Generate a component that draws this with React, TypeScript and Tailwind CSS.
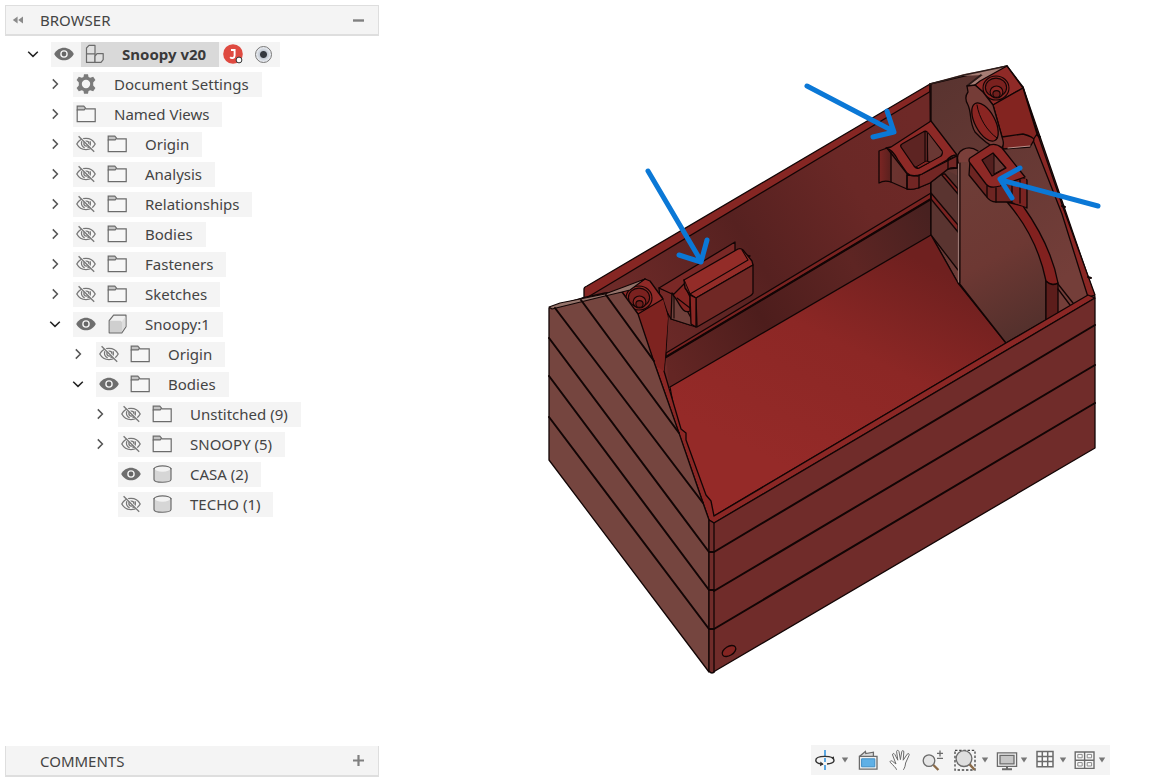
import { useState } from "react";
import type { ReactNode } from "react";

const ink = "#6b6b6b";

function FolderIcon() {
  return (
    <svg viewBox="0 0 20 18" className="h-[18px] w-5" fill="none" stroke={ink} strokeWidth="1.2">
      <path d="M1.2 4.6V16.6H19.2V3.9H9.6" fill="#f7f7f7" />
      <path d="M1.2 1.2H7.8L9.6 3.2L8.2 4.9H1.2Z" fill="#c4c4c4" />
    </svg>
  );
}

function EyeIcon() {
  return (
    <svg viewBox="0 0 20 14" className="h-3.5 w-5">
      <path d="M.2 7C4.5-1.4 15.5-1.4 19.8 7C15.5 15.4 4.5 15.4 .2 7Z" fill="#6e6e6e" />
      <circle cx="10" cy="7" r="3.8" fill="#f4f4f4" />
      <circle cx="10" cy="7" r="2.4" fill="#666" />
    </svg>
  );
}

function EyeOffIcon() {
  return (
    <svg viewBox="0 0 20 18" className="h-[18px] w-5" fill="none" stroke="#777" strokeWidth="1.3">
      <path d="M.8 9C4.8 1.6 15.2 1.6 19.2 9C15.2 16.4 4.8 16.4 .8 9Z" />
      <path d="M5.8 6.2C4.9 9 6 11.6 8.6 12.8M14 6.2C15 9 14 11.6 11.6 12.8" />
      <circle cx="10.4" cy="8.6" r="2.5" />
      <path d="M3.4 1L18.8 16.4" stroke="#f4f4f4" strokeWidth="1.6" />
      <path d="M2.6 1.2L18.2 16.8" />
    </svg>
  );
}

function GearIcon() {
  return (
    <svg viewBox="0 0 20 20" className="size-5">
      <path
        fillRule="evenodd"
        fill="#7b7b7b"
        d="M8 .2H12L12.5 3L14.2 3.8L17.2 2.7L19.4 6L17.2 8.6V11.4L19.4 14L17.2 17.3L14.2 16.2L12.5 17L12 19.8H8L7.5 17L5.8 16.2L2.8 17.3L.6 14L2.8 11.4V8.6L.6 6L2.8 2.7L5.8 3.8L7.5 3ZM10 5.8A4.2 4.2 0 1 0 10 14.2A4.2 4.2 0 1 0 10 5.8Z"
      />
    </svg>
  );
}

function AssemblyIcon() {
  return (
    <svg viewBox="0 0 20 20" className="size-5" fill="#e0e0e0" stroke={ink} strokeWidth="1.2" strokeLinejoin="round">
      <path d="M2.5 10V4L5 1.4H11V10Z" />
      <path d="M2.5 10H11V18.4H2.5Z" />
      <path d="M11 12.2L13 9.6H19.2V15.6L17 18.4H11Z" />
    </svg>
  );
}

function ComponentIcon() {
  return (
    <svg viewBox="0 0 20 20" className="size-5" stroke={ink} strokeWidth="1.2" strokeLinejoin="round">
      <path d="M2.2 6.6L6.6 1.2H19V12.6L14.8 18.8H2.2Z" fill="#f0f0f0" />
      <path d="M2.8 6.8H13.6L15 8V18.2H2.8Z" fill="#cfcfcf" stroke="none" />
      <path d="M15 7.6L18.4 2.6V12.4L15 17.6Z" fill="#dedede" stroke="none" />
    </svg>
  );
}

function BodyIcon() {
  return (
    <svg viewBox="0 0 20 18" className="h-[18px] w-5" stroke={ink} strokeWidth="1.2">
      <path d="M2 3.6V14.4C2 18.2 19 18.2 19 14.4V3.6Z" fill="#d6d6d6" />
      <ellipse cx="10.5" cy="3.8" rx="8" ry="2.9" fill="#f2f2f2" stroke="none" />
      <path d="M2 4.2C2-.2 19-.2 19 4.2" fill="none" />
    </svg>
  );
}

type IconName = "folder" | "gear" | "assembly" | "component" | "body";

const icons: Record<IconName, ReactNode> = {
  folder: <FolderIcon />,
  gear: <GearIcon />,
  assembly: <AssemblyIcon />,
  component: <ComponentIcon />,
  body: <BodyIcon />,
};

type Node = {
  name: string;
  depth: 0 | 1 | 2 | 3;
  icon: IconName;
  visible?: boolean;
  open?: boolean;
  leaf?: boolean;
};

const nodes: Node[] = [
  { name: "Snoopy v20", depth: 0, icon: "assembly", visible: true, open: true },
  { name: "Document Settings", depth: 1, icon: "gear" },
  { name: "Named Views", depth: 1, icon: "folder" },
  { name: "Origin", depth: 1, icon: "folder", visible: false },
  { name: "Analysis", depth: 1, icon: "folder", visible: false },
  { name: "Relationships", depth: 1, icon: "folder", visible: false },
  { name: "Bodies", depth: 1, icon: "folder", visible: false },
  { name: "Fasteners", depth: 1, icon: "folder", visible: false },
  { name: "Sketches", depth: 1, icon: "folder", visible: false },
  { name: "Snoopy:1", depth: 1, icon: "component", visible: true, open: true },
  { name: "Origin", depth: 2, icon: "folder", visible: false },
  { name: "Bodies", depth: 2, icon: "folder", visible: true, open: true },
  { name: "Unstitched (9)", depth: 3, icon: "folder", visible: false },
  { name: "SNOOPY (5)", depth: 3, icon: "folder", visible: false },
  { name: "CASA (2)", depth: 3, icon: "body", visible: true, leaf: true },
  { name: "TECHO (1)", depth: 3, icon: "body", visible: false, leaf: true },
];

const indents = ["pl-4", "pl-[38px]", "pl-[61px]", "pl-[83px]"];

function TreeRow({ node }: { node: Node }) {
  const [visible, setVisible] = useState(node.visible);
  const root = node.depth === 0;
  return (
    <li className={`flex h-[30px] items-center ${indents[node.depth]}`}>
      {node.leaf ? (
        <span className="w-[30px]" />
      ) : (
        <button type="button" aria-label={`Toggle ${node.name}`} className="mr-1.5 flex size-6 items-center justify-center">
          <svg viewBox="0 0 12 12" className="size-3" fill="none" stroke={node.open ? "#222" : "#555"} strokeWidth="1.5">
            <path d={node.open ? "M1.2 3.8L6 8.4L10.8 3.8" : "M3.8 1.4L8.4 6L3.8 10.6"} />
          </svg>
        </button>
      )}
      <div className="flex h-[25px] items-center bg-[#f4f4f4]">
        {visible !== undefined && (
          <button
            type="button"
            aria-label={`Visibility of ${node.name}`}
            onClick={() => setVisible(!visible)}
            className={`flex h-full items-center pl-[3px] ${root ? "w-[30px]" : "w-[31px]"}`}
          >
            {visible ? <EyeIcon /> : <EyeOffIcon />}
          </button>
        )}
        <button
          type="button"
          className={`flex h-full items-center gap-[18px] pr-[13px] pl-[3px] whitespace-nowrap ${root ? "bg-[#d9d9d9] font-bold text-[#3a3a3a]" : ""}`}
        >
          {icons[node.icon]}
          <span>{node.name}</span>
        </button>
        {root && (
          <div className="flex items-center gap-3 pr-2 pl-1">
            <svg viewBox="0 0 20 20" className="size-5" role="img" aria-label="Owner J">
              <circle cx="10" cy="10" r="9.8" fill="#df4a41" />
              <path d="M8 6H11.6V11.8C11.6 14.4 8.4 14.6 7.2 13.2" fill="none" stroke="#fff" strokeWidth="1.9" />
              <circle cx="16" cy="16" r="2.9" fill="#fff" stroke="#333" strokeWidth="1" />
            </svg>
            <input
              type="radio"
              aria-label="Activate component"
              defaultChecked
              className="size-[17px] appearance-none rounded-full border border-[#777] bg-[radial-gradient(circle,#34383f_0_3px,#c3cad4_4px,#f2f4f7_8px)]"
            />
          </div>
        )}
      </div>
    </li>
  );
}

function Counterbore({ x, y }: { x: number; y: number }) {
  return (
    <g fill="none" stroke="#140606" strokeWidth="1.1">
      <ellipse cx={x} cy={y} rx="13" ry="12" fill="#8a2724" />
      <ellipse cx={x} cy={y - 0.5} rx="10.6" ry="9.4" fill="#7a211f" />
      <ellipse cx={x + 0.5} cy={y + 4} rx="6.4" ry="6" fill="#8a2724" />
      <ellipse cx={x + 0.5} cy={y + 6} rx="3.6" ry="3.4" fill="#6f1f1d" />
    </g>
  );
}

function Model() {
  return (
    <svg
      viewBox="540 60 570 630"
      className="mt-[60px] mr-12 h-[630px] w-[570px] shrink-0 self-end"
      role="img"
      aria-label="Red box model with three arrows"
    >
      <defs>
        <linearGradient id="floor" gradientUnits="userSpaceOnUse" x1="900" y1="250" x2="790" y2="470">
          <stop offset="0" stopColor="#6f201f" />
          <stop offset=".45" stopColor="#8c2725" />
          <stop offset="1" stopColor="#952a28" />
        </linearGradient>
        <linearGradient id="back" gradientUnits="userSpaceOnUse" x1="640" y1="330" x2="932" y2="150">
          <stop offset="0" stopColor="#6d2a28" />
          <stop offset=".4" stopColor="#562120" />
          <stop offset=".75" stopColor="#6a2826" />
          <stop offset="1" stopColor="#6e2927" />
        </linearGradient>
        <linearGradient id="skirt" gradientUnits="userSpaceOnUse" x1="670" y1="370" x2="932" y2="220">
          <stop offset="0" stopColor="#642624" />
          <stop offset=".35" stopColor="#4d1d1c" />
          <stop offset=".7" stopColor="#5e2523" />
          <stop offset="1" stopColor="#482120" />
        </linearGradient>
        <linearGradient id="plate" gradientUnits="userSpaceOnUse" x1="960" y1="180" x2="1040" y2="330">
          <stop offset="0" stopColor="#6e3d37" />
          <stop offset=".5" stopColor="#6d3833" />
          <stop offset="1" stopColor="#52302c" />
        </linearGradient>
        <linearGradient id="gable" gradientUnits="userSpaceOnUse" x1="935" y1="90" x2="1075" y2="270">
          <stop offset="0" stopColor="#5a3430" />
          <stop offset="1" stopColor="#743e39" />
        </linearGradient>
        <linearGradient id="lug" gradientUnits="userSpaceOnUse" x1="879" y1="165" x2="908" y2="165">
          <stop offset="0" stopColor="#7c2523" />
          <stop offset=".4" stopColor="#5a201e" />
          <stop offset=".45" stopColor="#6b3430" />
          <stop offset="1" stopColor="#6b302c" />
        </linearGradient>
      </defs>

      <g stroke="#120505" strokeWidth="1.3" strokeLinejoin="round" strokeLinecap="round">
        {/* back wall */}
        <path d="M584 299V289Q584 287 587 286L930 84V95L600 300Z" fill="#862623" />
        <path d="M588 297L931 91L931 235L668 388L640 300Z" fill="url(#back)" />
        <path d="M666 356L931 200V235L669 388Z" fill="url(#skirt)" stroke="none" />
        <path d="M666 353L931 193V199L666 357Z" fill="#7a2321" />
        <path d="M666 357L931 199" strokeWidth="2.2" />

        {/* right gable */}
        <path d="M930 84L1007 66L1023 87L1095 297L1006 343L958 283L931 235Z" fill="url(#gable)" />
        <path d="M931 162V235L958 270V176Z" fill="#5a3430" stroke="none" />
        <path d="M941 174L958 194V189L945 174ZM931 193L958 225V232L931 199Z" fill="#7a2321" />
        <path d="M931 84V235L958 270" fill="none" />
        <path d="M930 84L964 74L1007 66L980 81L975 85L967 86L983 75L962 76Z" fill="#a67d74" stroke="none" />
        <path d="M930 84L964 75L1007 66M967 86L981 75" fill="none" stroke="#2b1b19" strokeWidth="1.6" />
        <path d="M1023 87L1038 135L1064 210L1095 295L1088 297L1062 214L1033 140Z" fill="#8a2724" />
        <path d="M1037 135L1040 137M1062 206L1065 207M1088 277L1091 278" strokeWidth="2" />

        {/* floor */}
        <path d="M931 235L670 387L678 431L714 516L1006 343L958 283Z" fill="url(#floor)" />

        {/* divider plate */}
        <path d="M958 162L966 153L1003 196C1023 218 1040 246 1046 270V320L1006 343L959 283Z" fill="url(#plate)" />
        <path d="M958.500 164V282" stroke="#9a7873" strokeWidth="1.2" />
        <path d="M960 163V283" strokeWidth="1.1" />
        <path d="M1007 202L1023 206C1040 230 1053 256 1058 283C1054 286 1048 284 1046 281C1040 251 1026 224 1007 202Z" fill="#82211f" />
        <path d="M1046 281C1049 284 1054 286 1058 283V314L1046 321Z" fill="#5c1d1b" />
        <path d="M1058 284L1073 303M1058 289L1070 305" />

        {/* boss on the right gable */}
        <path d="M975 85L980 81L1007 66L1023 88L993 105L983 92Z" fill="#8f2a27" />
        <Counterbore x={996} y={88} />
        <path d="M993 105L1023 88L1037 134L1033 140L1002 137Z" fill="#832420" />
        <path d="M1002 137L1023 134Q1034 137 1034 140L1030 147L1003 149Z" fill="#7b2825" />
        <path d="M1008 148L1030 146" stroke="#b98e88" strokeWidth="1" />
        <path d="M967 86L975 85L983 92L993 105L1002 137Q1006 148 998 149Q987 145 975 132C969 122 972 114 968 105C965 100 965 96 968 92Z" fill="#753c37" />
        <ellipse cx="985" cy="122" rx="10" ry="21" transform="rotate(-28 985 122)" fill="#8a2522" />
        <path d="M977 105C979 118 987 131 997 138" fill="none" strokeWidth="1" />
        <path d="M958 162C955 150 968 144 978 151L968 162Z" fill="#7a3f3a" stroke="none" />
        <path d="M958 162C955 150 968 144 978 151" fill="none" />

        {/* socket at the back wall */}
        <path d="M879 151L887 148L908 175L957 156V168L948 169L930 183L918 188Q912 190 907 189L891 182Q884 180 879 183Z" fill="url(#lug)" />
        <path d="M907 175L918 176L957 156V168Q952 167 948 169L930 183L918 188Q912 190 907 189Z" fill="#722624" />
        <path d="M907 175V188M919 176V188M891 152V182M948 160V169" />
        <path d="M886 148L891 147L931 121L957 155Q951 155 947 160L922 174Q912 178 907 173L898 160Q892 149 886 148Z" fill="#8d2926" />
        <path d="M902 144L923 132Q926 130 928 133L942 151Q943 154 941 156L921 167Q917 170 914 166L901 147Q900 145 902 144Z" fill="#5d2422" />
        <path d="M927 132L942 152L940 156L929 162Z" fill="#6a3834" stroke="none" />
        <path d="M925 132V163M927.500 133V162" fill="none" strokeWidth="1.1" />
        <path d="M916 167L926 161L930 162L919 168Z" fill="#842522" strokeWidth="1" />

        {/* socket at the divider */}
        <path d="M970 161L969 175L986 196Q990 202 996 202H1012Q1020 202 1027 208V180L1018 174Z" fill="#6d2522" />
        <path d="M1012 184L1026 178V207L1012 202Z" fill="#7a2422" stroke="none" />
        <path d="M970 158L990 145Q996 143 1002 148L1025 177L1000 186Q990 189 986 184L970 163Q968 160 970 158Z" fill="#8d2926" />
        <path d="M987 186V197M996 188V202M1012 184V202M1020 180V203" />
        <path d="M982 160L993 153L1006 168L992 176Z" fill="#54201f" />
        <path d="M994 155V174L1005 168Z" fill="#6a3834" strokeWidth="1" />

        {/* clip on the back wall */}
        <path d="M659 288L672 293L690 325L671 319L660 300Z" fill="#742826" />
        <path d="M659 288L735 242V253L750 256L690 297L672 294Z" fill="#7a2826" />
        <path d="M672 293L684 305L696 327L671 319Z" fill="#70403b" />
        <path d="M674 295V318" strokeWidth="1.1" />
        <path d="M673 295L684 284L690 297V311C682 315 679 301 673 295Z" fill="#842522" />
        <path d="M677 298L690 308" fill="none" strokeWidth="1.1" />
        <path d="M684 280L738 249Q741 248 743 250L752 261L753 265L696 298L690 294Z" fill="#932c28" />
        <path d="M684 280L685 288L690 295" fill="#6d2422" />
        <path d="M696 298L753 265V293Q752 295 750 296L697 327Z" fill="#702825" />
        <path d="M690 295L696 298V327L691 324Z" fill="#8a2724" />
        <path d="M690 294L748 260L742 250" fill="none" strokeWidth="1.1" />

        {/* left gable */}
        <path d="M622 292L645 279L662 297L668 315L666 350L664 371L681 429L686 433V440L706 495L711 501L714 516L1006 343L1088 295L1095 298L714 523L709 520L654 362L638 314Z" fill="#8b2725" />
        <path d="M638 314L663 299L668 318L664 371L656 366Z" fill="#7e2320" stroke="none" />
        <path d="M622 292L645 279L650 281L663 299L638 314Z" fill="#8f2a27" />
        <Counterbore x={639} y={298} />
        <path d="M549 308L582 298L605 293L622 292L638 314L654 362L679 433L703 503L709 520V672L549 460Z" fill="#75453f" />
        <path d="M549 307L560 303L605 294L645 279L630 290L622 292L605 296L552 309Z" fill="#94736a" strokeWidth="1.1" />
        <path d="M549 417L709 629M549 376L709 590M549 338L709 552M555 308L703 503M581 300L679 433M606 295L654 361" fill="none" strokeWidth="2" />

        {/* front wall */}
        <path d="M709 520L714 523L1095 298V448L715 671Q712 675 709 671Z" fill="#702c2a" />
        <path d="M714 552L1095 325M714 591L1095 365M714 629L1095 403M709 552H714M709 590H714M709 629H714" fill="none" strokeWidth="2" />
        <path d="M714 523V672" fill="none" />
        <ellipse cx="729" cy="651" rx="7.500" ry="4.500" transform="rotate(-32 729 651)" fill="#842522" />
      </g>

      <g fill="none" stroke="#0b78d6" strokeWidth="5" strokeLinecap="round" strokeLinejoin="round">
        <path d="M807 86L893 131M887 111L894 132L873 137" />
        <path d="M648 171L701 261M679 255L701 262L707 240" />
        <path d="M1098 206L1001 180M1020 168L1000 179L1012 198" />
      </g>
    </svg>
  );
}

function ToolButton({ label, children }: { label: string; children: ReactNode }) {
  return (
    <button type="button" aria-label={label} className="flex size-6 items-center justify-center">
      <svg viewBox="0 0 24 24" className="size-6" fill="none" stroke={ink} strokeWidth="1.3">
        {children}
      </svg>
    </button>
  );
}

function MenuCaret({ label }: { label: string }) {
  return (
    <button type="button" aria-label={label} className="flex h-6 w-3 items-center justify-center">
      <svg viewBox="0 0 8 6" className="h-1.5 w-2">
        <path d="M.8 .5H7.2L4 5.6Z" fill="#777" />
      </svg>
    </button>
  );
}

function Toolbar() {
  return (
    <nav aria-label="View tools" className="mr-12 mb-1.5 flex h-[30px] items-center gap-[3px] self-end bg-[#f4f4f4] px-0.5">
      <div className="flex gap-0.5">
        <ToolButton label="Orbit">
          <path d="M12 2V8M12 10V14M12 17V22" stroke="#4a9fe0" strokeWidth="1.8" />
          <path d="M10 16.2C5.6 15.8 2.8 14.2 2.8 12.2C2.8 9.8 6.6 8.4 11.8 8.4C17 8.4 21 9.8 21 12.2C21 14.2 18.4 15.6 14 16" stroke="#333" strokeWidth="1.4" />
          <path d="M7.4 13.6L10.6 16.2L7 18.2ZM17.8 9.6L21 8.4L21 12.2Z" fill="#333" stroke="none" />
        </ToolButton>
        <MenuCaret label="Orbit options" />
      </div>
      <div className="flex gap-2 pr-1.5 pl-0.5">
        <ToolButton label="Look at">
          <path d="M3.4 8.4L9.4 3.4L9.8 5.6L17.4 4.2V8.4" fill="#ddd" />
          <path d="M3.4 8.4H21V21.2H3.4Z" fill="#f2f2f2" />
          <path d="M5.6 10.8H18.8V18.8H5.6Z" fill="#5fb0e6" stroke="#3f8fc7" strokeWidth="1" />
        </ToolButton>
        <ToolButton label="Pan">
          <path
            d="M8.6 21.8C8 19.4 5 17.6 2.2 14.2C1.6 13 3.4 12.2 4.6 13.4L8 16L4.6 7C4.2 5.4 6 4.8 6.8 6.4L9.8 12.2L8.6 3.6C8.6 2 10.6 2 11 3.6L12.4 11.6L13.8 3.6C14.2 2 16 2.4 15.8 4L15.2 12.2L19.2 6.2C20.2 4.8 21.8 5.8 21 7.4L17.6 15C17.2 18 16.8 19.6 15.4 21.8"
            fill="#fafafa"
            strokeWidth="1"
          />
        </ToolButton>
        <ToolButton label="Zoom">
          <circle cx="9" cy="12.6" r="5.8" fill="#e6e6e6" />
          <path d="M13.4 17L18.4 22" stroke="#8a6a48" strokeWidth="2.4" />
          <path d="M17 5.4H23M20 2.4V8.4M17 10.4H23" />
        </ToolButton>
      </div>
      <div className="flex gap-0.5">
        <ToolButton label="Zoom window">
          <path d="M2 2.4H22V22H2Z" strokeDasharray="2.4 1.8" stroke="#444" />
          <circle cx="11" cy="10.6" r="7.9" fill="#dedede" />
          <path d="M16.6 16.4L21.6 21.8" stroke="#8a6a48" strokeWidth="2.4" />
        </ToolButton>
        <MenuCaret label="Zoom options" />
      </div>
      <div className="flex">
        <ToolButton label="Display settings">
          <path d="M3.4 4.8H22.6V18.4H3.4Z" fill="#f2f2f2" />
          <path d="M6 7.4H20V15.8H6Z" fill="#c6c6c6" />
          <path d="M13 18.4V20.6M8 21.2H18" strokeWidth="2" />
        </ToolButton>
        <MenuCaret label="Display options" />
      </div>
      <div className="flex">
        <ToolButton label="Grid and snaps">
          <path d="M4 3.4H20V18.8H4ZM4 8.5H20M4 13.6H20M9.3 3.4V18.8M14.7 3.4V18.8" fill="#fafafa" strokeWidth="1.5" />
        </ToolButton>
        <MenuCaret label="Grid options" />
      </div>
      <div className="flex">
        <ToolButton label="Viewports">
          <path d="M3.2 4H22V20.4H3.2ZM3.2 12.2H22M12.6 4V20.4" fill="#fafafa" strokeWidth="1.4" />
          <path d="M5.8 6.4H10.2V9.8H5.8ZM15.2 6.4H19.6V9.8H15.2ZM5.8 14.6H10.2V18H5.8ZM15.2 14.6H19.6V18H15.2Z" strokeWidth="1" stroke="#8b8b8b" />
        </ToolButton>
        <MenuCaret label="Viewport options" />
      </div>
    </nav>
  );
}

export default function App() {
  return (
    <main className="flex min-h-screen bg-white font-['Noto_Sans',sans-serif] text-[15px] leading-5 text-[#444]">
      <aside className="flex w-[379px] shrink-0 flex-col pt-[5px] pb-1 pl-[5px]">
        <header className="flex h-[31px] items-center border border-b-2 border-[#dedede] bg-[#f4f4f4] pr-3.5 pl-1.5">
          <button type="button" aria-label="Collapse browser" className="flex w-3">
            <svg viewBox="0 0 12 8" className="h-2 w-3" fill="#8a8a8a">
              <path d="M5.6 .6V7.4L.8 4ZM11 .6V7.4L6.2 4Z" />
            </svg>
          </button>
          <h1 className="flex-1 pl-4">BROWSER</h1>
          <button type="button" aria-label="Minimize browser" className="flex">
            <svg viewBox="0 0 11 11" className="size-[11px]">
              <path d="M0 5.5H11" stroke="#808080" strokeWidth="2.4" />
            </svg>
          </button>
        </header>
        <ul className="flex flex-1 flex-col pt-[3px]">
          {nodes.map((node, i) => (
            <TreeRow key={i} node={node} />
          ))}
        </ul>
        <footer className="flex h-[31px] items-center border border-t-0 border-b-2 border-[#dedede] bg-[#f4f4f4] pr-3.5 pl-[34px]">
          <h2 className="flex-1">COMMENTS</h2>
          <button type="button" aria-label="Expand comments" className="flex">
            <svg viewBox="0 0 11 11" className="size-[11px]">
              <path d="M0 5.5H11M5.5 0V11" stroke="#808080" strokeWidth="2.2" />
            </svg>
          </button>
        </footer>
      </aside>
      <section aria-label="Canvas" className="flex min-w-0 flex-1 flex-col justify-between">
        <Model />
        <Toolbar />
      </section>
    </main>
  );
}
